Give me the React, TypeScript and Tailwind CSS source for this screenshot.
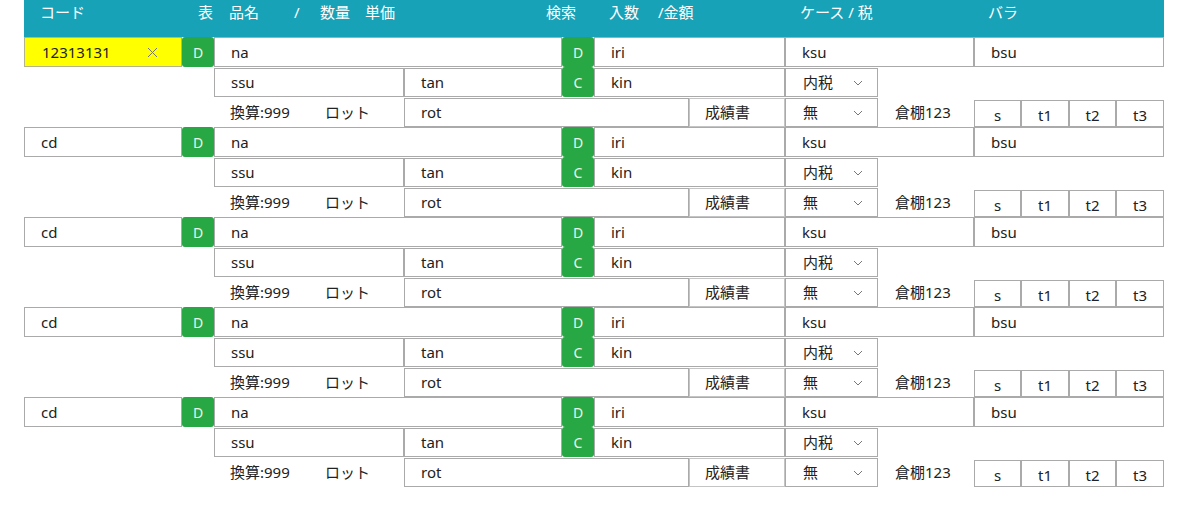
import React from "react";

const FONT = { fontFamily: '"Noto Sans", "Noto Sans CJK JP", sans-serif' };

function Chevron() {
  return (
    <svg width="10" height="6" viewBox="0 0 10 6" className="ml-auto mr-[14px]">
      <path d="M1 1 L5 5 L9 1" fill="none" stroke="#777" strokeWidth="1" />
    </svg>
  );
}

function Field({ children, className = "" }: { children?: React.ReactNode; className?: string }) {
  return (
    <div className={`flex items-center border border-[#aaa] bg-white pl-4 text-[15px] text-[#222] ${className}`}>
      {children}
    </div>
  );
}

function GreenBtn({ label, className = "" }: { label: string; className?: string }) {
  return (
    <div className={`flex items-center justify-center rounded-[3px] bg-[#28a745] text-[14px] text-[#e9f7ec] ${className}`}>
      {label}
    </div>
  );
}

function Group({ code, highlight }: { code: string; highlight?: boolean }) {
  return (
    <div className="grid grid-cols-[158px_32px_190px_158px_32px_95px_96px_93px_96px_47px_48px_47px_48px] grid-rows-[30px_30px_30px]">
      {/* row 1 */}
      {highlight ? (
        <div className="col-start-1 row-start-1 flex items-center border border-[#b5b38a] bg-[#ffff00] pl-[17px] text-[15px] text-[#222]">
          {code}
          <svg width="11" height="11" viewBox="0 0 11 11" className="ml-auto mr-[23px]">
            <path d="M1 1 L10 10 M10 1 L1 10" stroke="#777" strokeWidth="1" />
          </svg>
        </div>
      ) : (
        <Field className="col-start-1 row-start-1">{code}</Field>
      )}
      <GreenBtn label="D" className="col-start-2 row-start-1" />
      <Field className="col-start-3 col-span-2 row-start-1">na</Field>
      <GreenBtn label="D" className="col-start-5 row-start-1" />
      <Field className="col-start-6 col-span-2 row-start-1">iri</Field>
      <Field className="col-start-8 col-span-2 row-start-1">ksu</Field>
      <Field className="col-start-10 col-span-4 row-start-1">bsu</Field>

      {/* row 2 */}
      <Field className="col-start-3 row-start-2 mt-[1px]">ssu</Field>
      <Field className="col-start-4 row-start-2 mt-[1px]">tan</Field>
      <GreenBtn label="C" className="col-start-5 row-start-2" />
      <Field className="col-start-6 col-span-2 row-start-2 mt-[1px]">kin</Field>
      <div className="col-start-8 row-start-2 mt-[1px] flex items-center border border-[#aaa] bg-white pl-[17px] text-[15px] text-[#222]">
        内税
        <Chevron />
      </div>

      {/* row 3 */}
      <div className="col-start-3 row-start-3 flex items-center pl-4 text-[15px] text-[#222]">
        <span className="w-[95px]">換算:999</span>
        <span>ロット</span>
      </div>
      <Field className="col-start-4 col-span-3 row-start-3 mt-[1px]">rot</Field>
      <div className="col-start-7 row-start-3 mt-[1px] flex items-center border border-[#c4c4c4] bg-white pl-[15px] text-[15px] text-[#222]">
        成績書
      </div>
      <div className="col-start-8 row-start-3 mt-[1px] flex items-center border border-[#aaa] bg-white pl-[17px] text-[15px] text-[#222]">
        無
        <Chevron />
      </div>
      <div className="col-start-9 row-start-3 flex items-center pl-[17px] text-[15px] text-[#222]">倉棚123</div>
      {["s", "t1", "t2", "t3"].map((t, i) => (
        <div
          key={t}
          className={`row-start-3 mt-[3px] flex items-center justify-center border border-[#aaa] bg-white pt-[4px] text-[15px] text-[#222] ${
            ["col-start-10", "col-start-11", "col-start-12", "col-start-13"][i]
          }`}
        >
          {t}
        </div>
      ))}
    </div>
  );
}

export default function App() {
  return (
    <div className="min-h-[505px] w-[1201px] bg-white" style={FONT}>
      <div className="ml-[24px] w-[1140px]">
        <div className="flex h-[37px] bg-[#18a2b8] pt-[1px] text-[15px] leading-[22px] text-white">
          <span className="w-[174px] pl-4">コード</span>
          <span className="w-[31px]">表</span>
          <span className="w-[65px]">品名</span>
          <span className="w-[26px]">/</span>
          <span className="w-[45px]">数量</span>
          <span className="w-[181px]">単価</span>
          <span className="w-[63px]">検索</span>
          <span className="w-[49px]">入数</span>
          <span className="w-[142px]">/金額</span>
          <span className="w-[188px]">ケース / 税</span>
          <span>バラ</span>
        </div>
        <Group code="12313131" highlight />
        <Group code="cd" />
        <Group code="cd" />
        <Group code="cd" />
        <Group code="cd" />
      </div>
    </div>
  );
}
